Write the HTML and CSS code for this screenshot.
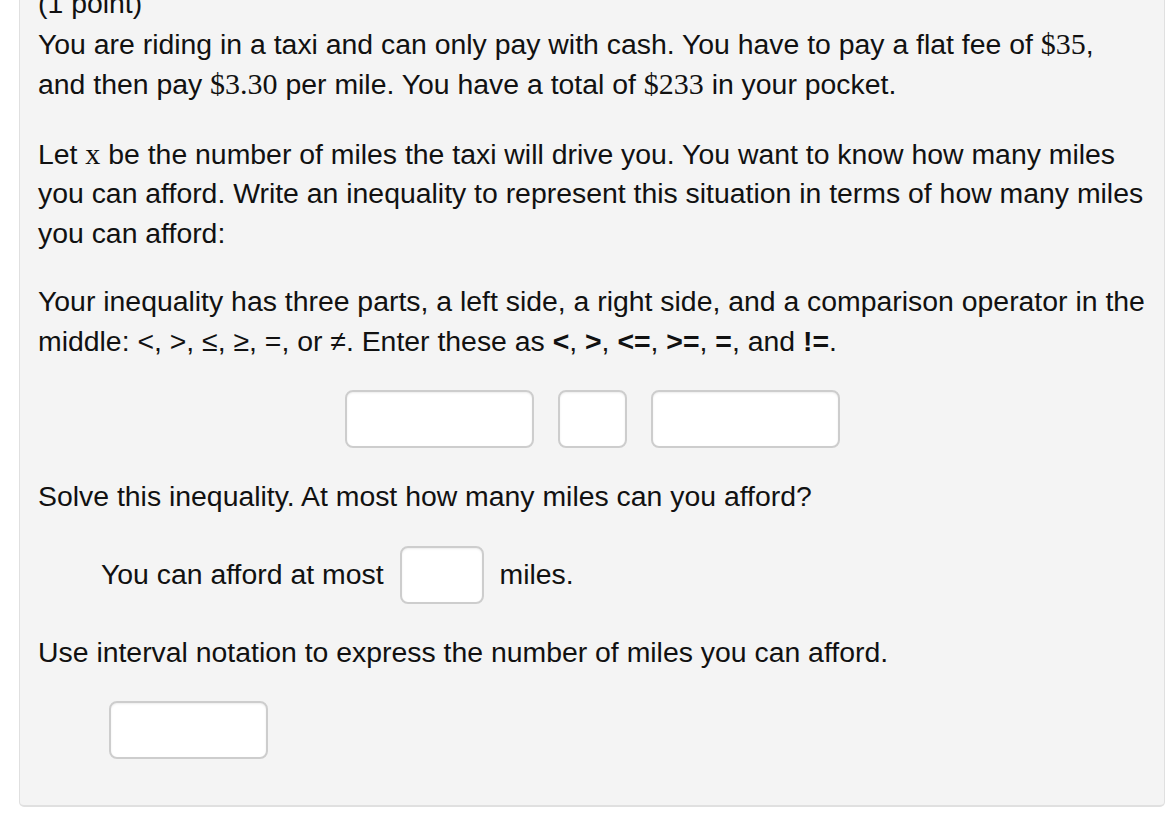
FILE: index.html
```html
<!DOCTYPE html>
<html>
<head>
<meta charset="utf-8">
<link rel="stylesheet" href="styles.css">
</head>
<body>
<div class="problem">
  <p class="para">(1 point)<br>You are riding in a taxi and can only pay with cash. You have to pay a flat fee of <span class="m">$35</span>, and then pay <span class="m">$3.30</span> per mile. You have a total of <span class="m">$233</span> in your pocket.</p>
  <p class="para">Let <span class="m">x</span> be the number of miles the taxi will drive you. You want to know how many miles you can afford. Write an inequality to represent this situation in terms of how many miles you can afford:</p>
  <p class="para">Your inequality has three parts, a left side, a right side, and a comparison operator in the middle: &lt;, &gt;, &le;, &ge;, =, or &ne;. Enter these as <b>&lt;</b>, <b>&gt;</b>, <b>&lt;=</b>, <b>&gt;=</b>, <b>=</b>, and <b>!=</b>.</p>
  <div class="ineq-row">
    <input class="box wide" type="text">
    <input class="box small" type="text">
    <input class="box wide" type="text">
  </div>
  <p class="para">Solve this inequality. At most how many miles can you afford?</p>
  <div class="answer-row">
    <span>You can afford at most</span>
    <input class="box mid" type="text">
    <span>miles.</span>
  </div>
  <p class="para">Use interval notation to express the number of miles you can afford.</p>
  <div class="interval-row">
    <input class="box interval" type="text">
  </div>
</div>
</body>
</html>
```
FILE: styles.css
```css
html, body {
  margin: 0;
  padding: 0;
  background: #ffffff;
}
body {
  font-family: "Liberation Sans", Arial, Helvetica, sans-serif;
  font-size: 28.4px;
  line-height: 39.5px;
  color: #111;
  overflow: hidden;
}
.problem {
  margin: -27px 0 0 19px;
  width: 1146px;
  box-sizing: border-box;
  background: #f4f4f4;
  border: 1px solid #e0e0e0;
  border-bottom: 2px solid #e0e0e0;
  border-radius: 5px;
  padding: 10px 18px 46px 18px;
  display: flex;
  flex-direction: column;
  gap: 29px;
}
.para {
  margin: 0;
}
.m {
  font-family: "Liberation Serif", "Times New Roman", serif;
  font-size: 30px;
}
b {
  font-weight: bold;
}
.box {
  box-sizing: border-box;
  height: 58px;
  background: #fff;
  border: 2px solid #cdcdcd;
  border-radius: 8px;
  box-shadow: inset 0 1px 2px rgba(0,0,0,0.08);
  margin: 0;
  padding: 0;
  font-size: 24px;
}
.ineq-row {
  display: flex;
  justify-content: center;
  gap: 24px;
}
.wide { width: 189px; }
.small { width: 69px; }
.mid { width: 84px; }
.interval { width: 159px; }
.answer-row {
  display: flex;
  align-items: center;
  gap: 16px;
  padding-left: 63px;
}
.interval-row {
  padding-left: 71px;
}
```
